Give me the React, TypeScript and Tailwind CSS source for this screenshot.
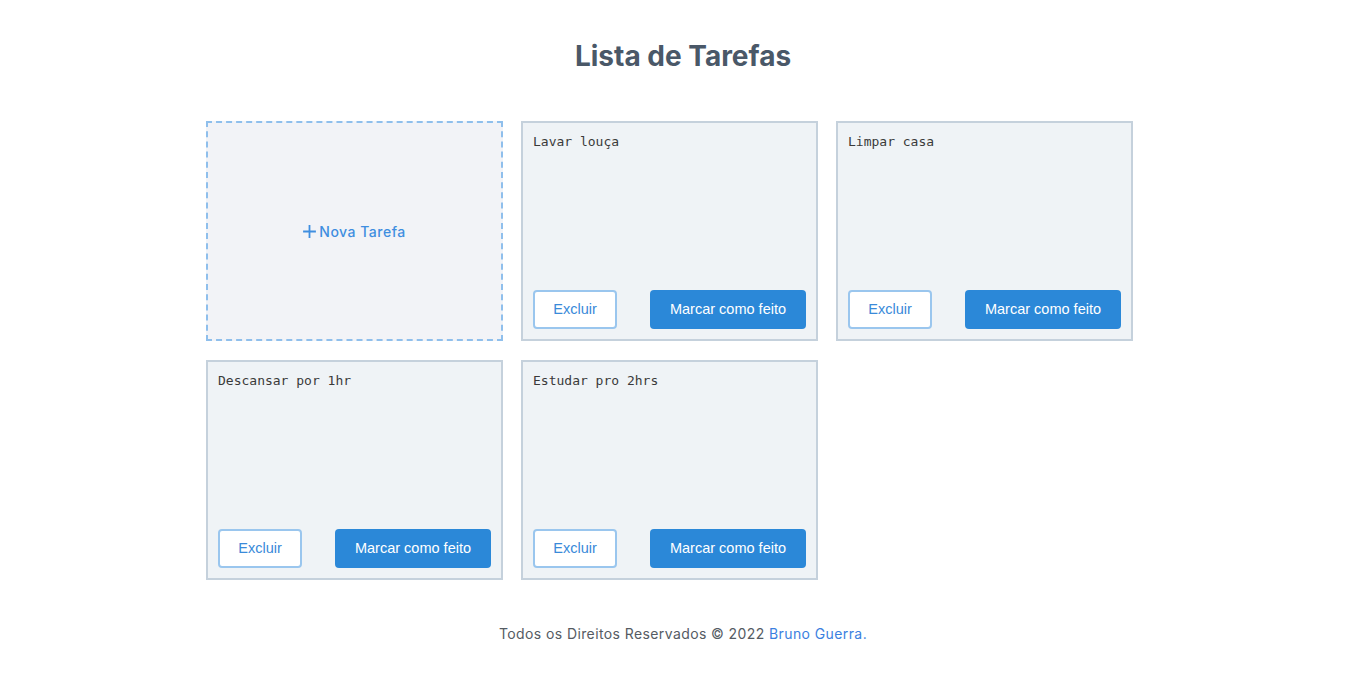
import React from 'react';

const tasks = ['Lavar louça', 'Limpar casa', 'Descansar por 1hr', 'Estudar pro 2hrs'];

const PlusIcon = () => (
  <svg width="13" height="13" viewBox="0 0 13 13" className="mr-[3px]">
    <path d="M6.5 1v11M1 6.5h11" stroke="#3f8ee0" strokeWidth="1.8" strokeLinecap="square" />
  </svg>
);

const TaskCard: React.FC<{ text: string }> = ({ text }) => (
  <div className="h-[220px] border-2 border-[#c5d1dc] bg-[#eff3f6] p-[10px] flex flex-col">
    <textarea
      defaultValue={text}
      className="flex-1 pt-[1px] resize-none bg-transparent outline-none text-[13px] leading-[16px] text-[#3a3a3a] font-['DejaVu_Sans_Mono',monospace]"
    />
    <div className="flex justify-between items-center font-['Liberation_Sans',Arial,sans-serif] text-[14.5px]">
      <button className="w-[84px] h-[39px] pt-[1px] bg-white border-2 border-[#9ac6ee] rounded-[4px] text-[#3a8ad9]">
        Excluir
      </button>
      <button className="w-[156px] h-[39px] pt-[1px] bg-[#2b88d8] rounded-[4px] text-white">
        Marcar como feito
      </button>
    </div>
  </div>
);

export default function App() {
  return (
    <div className="min-h-[681px] bg-white flex flex-col items-center font-['Inter',sans-serif]">
      <h1 className="mt-[38px] ml-[17px] text-[28px] leading-[36px] font-bold text-[#4a5868]">
        Lista de Tarefas
      </h1>
      <div className="mt-[47px] mr-[10px] grid grid-cols-[repeat(3,297px)] gap-x-[18px] gap-y-[19px]">
        <button className="h-[220px] border-2 border-dashed border-[#8fbfec] bg-[#f2f3f7] flex items-center justify-center text-[14px] font-medium text-[#3f8ee0] tracking-[0.5px]">
          <PlusIcon />
          Nova Tarefa
        </button>
        {tasks.map(t => (
          <TaskCard key={t} text={t} />
        ))}
      </div>
      <p className="mt-[44px] ml-[17px] text-[14px] leading-[20px] text-[#555b63] tracking-[0.4px]">
        Todos os Direitos Reservados © 2022 <a className="text-[#3b7fe0]">Bruno Guerra.</a>
      </p>
    </div>
  );
}
